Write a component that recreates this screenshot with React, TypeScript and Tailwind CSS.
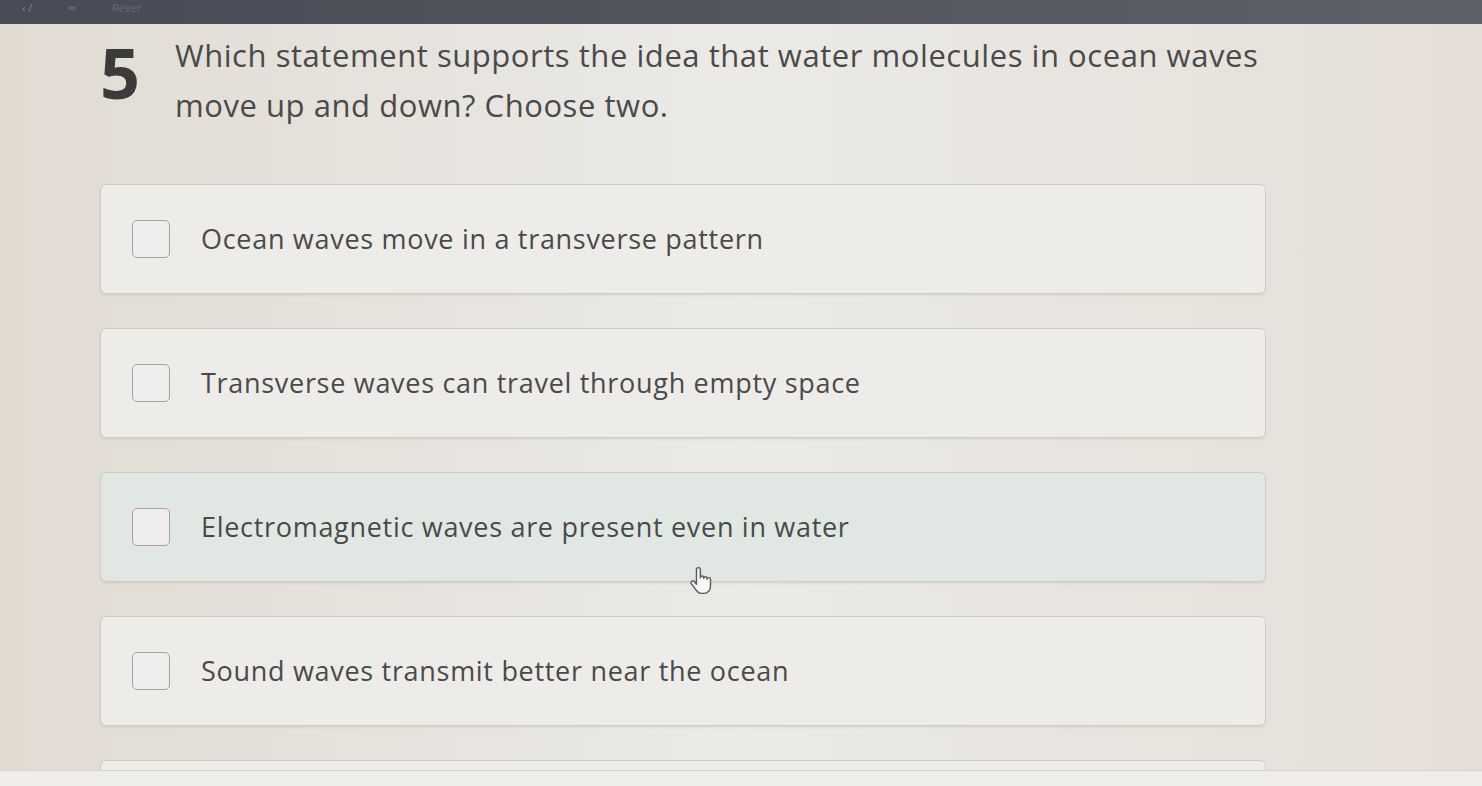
import React from "react";

const options = [
    { text: "Ocean waves move in a transverse pattern", hover: false },
    { text: "Transverse waves can travel through empty space", hover: false },
    { text: "Electromagnetic waves are present even in water", hover: true },
    { text: "Sound waves transmit better near the ocean", hover: false },
    { text: "", hover: false },
];

function HandCursor() {
    return (
        <svg width="26" height="30" viewBox="0 0 20 22" className="absolute left-[688px] top-[566px]">
            <path
                d="M6.5 2.2a1.5 1.5 0 0 1 3 0v6.3a1.3 1.3 0 0 1 2.6 0v0.5a1.3 1.3 0 0 1 2.6 0v0.7a1.3 1.3 0 0 1 2.6 0V15c0 3-2 5.5-5 5.5h-2c-2 0-3-1-4-2.5L2.5 13a1.4 1.4 0 0 1 2.2-1.7l1.8 2.2Z"
                fill="#f7f7f5"
                stroke="#5a5a5a"
                strokeWidth="1.1"
                strokeLinejoin="round"
            />
        </svg>
    );
}

function Option({ text, hover }: { text: string; hover: boolean }) {
    return (
        <div
            className={
                "flex h-[110px] shrink-0 items-center gap-[31px] rounded-[6px] border border-[#cdcbc7] px-[31px] shadow-[0_2px_2px_rgba(0,0,0,0.06)] " +
                (hover ? "bg-[#e1e8e4]" : "bg-[#edece9]")
            }
        >
            <div className="h-[38px] w-[38px] shrink-0 rounded-[5px] border-[1.5px] border-[#a3a3a1] bg-[#efeeec]" />
            <span className="text-[27px] tracking-[0.7px] text-[#4a4a4a]">{text}</span>
        </div>
    );
}

export default function App() {
    return (
        <main className="relative h-[786px] w-[1482px] overflow-hidden bg-linear-to-r from-[#e1dbd2] via-[#ebeae7] to-[#e5dfd7] font-['Open_Sans',sans-serif]">
            <div className="flex h-[24px] items-start gap-[36px] bg-linear-to-r from-[#474b55] to-[#5e6169] pl-[22px] pt-[1px] text-[11px] leading-[13px] text-[#7d838d]">
                <span>‹ /</span>
                <span>∞</span>
                <span className="opacity-60">Rever</span>
            </div>

            <div className="h-[746px] overflow-hidden pl-[100px] pr-[216px]">
                <div className="flex">
                    <div className="w-[75px] shrink-0 text-[70px] font-bold leading-[96px] text-[#3b3b3b]">5</div>
                    <p className="pt-[6px] text-[31px] leading-[50px] tracking-[0.55px] text-[#4a4a4a]">
                        Which statement supports the idea that water molecules in ocean waves
                        <br />
                        move up and down? Choose two.
                    </p>
                </div>

                <div className="mt-[54px] flex flex-col gap-[34px]">
                    {options.map((o, i) => (
                        <Option key={i} text={o.text} hover={o.hover} />
                    ))}
                </div>
            </div>

            <div className="h-[16px] border-t border-[#d6d4d0] bg-[#eeedea]" />

            <HandCursor />
        </main>
    );
}
